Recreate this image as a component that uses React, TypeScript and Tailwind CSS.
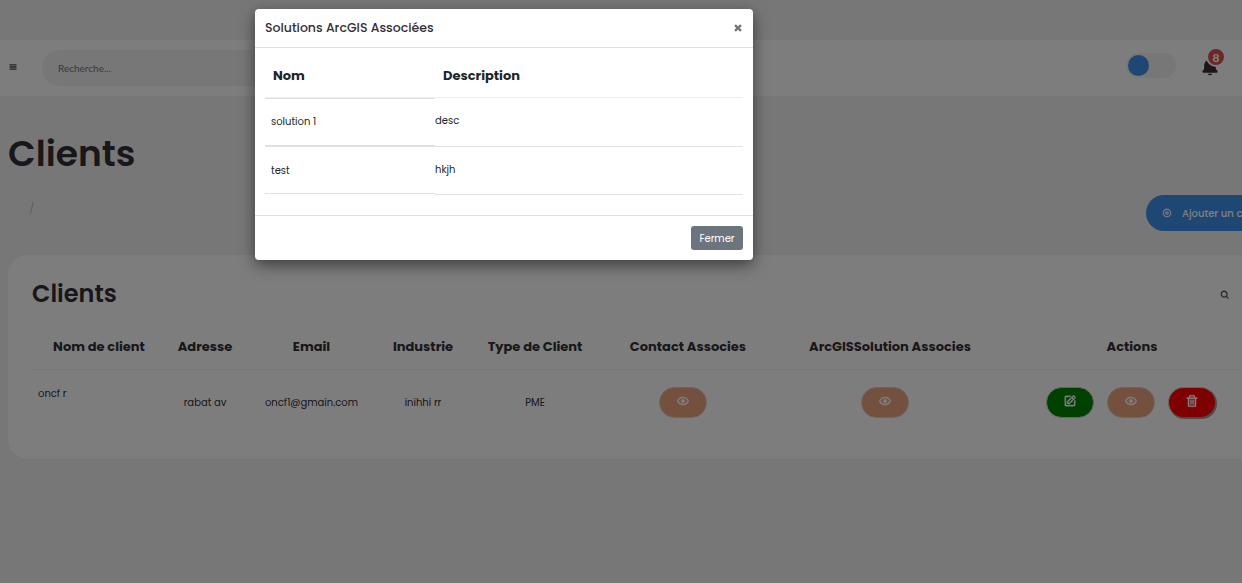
import type { ReactNode } from "react";
import { BiEdit, BiMenu, BiPlusCircle, BiSearch, BiShow, BiTrash, BiSolidBell } from "react-icons/bi";

const solutions = [
  { nom: "solution 1", description: "desc" },
  { nom: "test", description: "hkjh" },
];

const columns = [
  "Nom de client",
  "Adresse",
  "Email",
  "Industrie",
  "Type de Client",
  "Contact Associes",
  "ArcGISSolution Associes",
  "Actions",
];

const tableGrid = "grid grid-cols-[134px_78px_135px_88px_136px_170px_234px_250px]";

function Pill({ className, children }: { className: string; children: ReactNode }) {
  return (
    <button
      className={`flex h-[31px] w-12 items-center justify-center rounded-[20px] border pb-[3px] text-[14px] text-white ${className}`}
    >
      {children}
    </button>
  );
}

function ViewPill() {
  return (
    <Pill className="border-[#d2cac6] bg-[#e9a17f]">
      <BiShow className="stroke-current stroke-[0.6]" />
    </Pill>
  );
}

function Navbar() {
  return (
    <nav className="mt-10 flex h-14 shrink-0 items-center bg-[#fafafa]">
      <BiMenu className="mb-0.5 ml-2 size-[10px] stroke-current stroke-[0.5] text-[#222]" />
      <div className="ml-6 flex h-9 w-[400px] items-center rounded-full bg-[#eee] pl-4 font-['Lato',sans-serif] text-[10px] text-[#757575]">
        Recherche...
      </div>
      <div className="ml-auto mr-6 mt-[-5px] flex h-[25px] w-[50px] items-center rounded-full bg-[#eee] pl-[2px]">
        <div className="size-[21px] rounded-full bg-[#3c91e6]" />
      </div>
      <div className="relative mb-0.5 mr-[22px] size-5">
        <BiSolidBell className="size-5 text-[#342e37]" />
        <span className="absolute -top-[10px] left-[6px] flex size-5 items-center justify-center rounded-full border-2 border-[#fafafa] bg-[#db504a] pt-px font-['Lato',sans-serif] text-[12px] font-bold text-white">
          8
        </span>
      </div>
    </nav>
  );
}

function ClientsCard() {
  return (
    <section className="ml-2 mt-6 h-[204px] w-[1300px] rounded-[20px] bg-[#fbfbfb] pl-6 pt-[23px]">
      <div className="flex h-8 w-[1198px] items-center justify-between">
        <h3 className="text-[24px] font-semibold">Clients</h3>
        <BiSearch className="mt-[2px] size-[10px] stroke-current stroke-[0.5]" />
      </div>
      <div className={`${tableGrid} mt-3 h-12 items-center border-b border-[#eee] pt-[3px] text-center text-[13px] font-bold`}>
        {columns.map((label) => (
          <div key={label}>{label}</div>
        ))}
      </div>
      <div className={`${tableGrid} h-[65px] items-center text-center text-[10px]`}>
        <div className="mb-[18px] pl-1.5 text-left">oncf r</div>
        <div>rabat av</div>
        <div>oncf1@gmain.com</div>
        <div>inihhi rr</div>
        <div>PME</div>
        <div className="flex justify-center pr-2.5">
          <ViewPill />
        </div>
        <div className="flex justify-center pr-2.5">
          <ViewPill />
        </div>
        <div className="flex gap-[13px] pl-[39px]">
          <Pill className="border-[#c5ccc5] bg-[#008000]">
            <BiEdit className="stroke-current stroke-[0.6]" />
          </Pill>
          <ViewPill />
          <Pill className="border-[#ccc] border-r-[#999] border-b-[#999] bg-[#ff0000] shadow-[1px_1px_0_#999]">
            <BiTrash className="stroke-current stroke-[0.6]" />
          </Pill>
        </div>
      </div>
    </section>
  );
}

function SolutionsModal() {
  return (
    <div className="flex h-[251px] w-[498px] flex-col rounded-[4px] bg-white text-[#212529] shadow-[0_5px_15px_rgba(0,0,0,0.5)]">
      <header className="flex h-[39px] items-center justify-between border-b border-[#dee2e6] px-2.5">
        <h5 className="text-[12.5px] font-medium text-[#342e37]">Solutions ArcGIS Associées</h5>
        <button className="pr-px text-[#777]">
          <svg viewBox="0 0 8 8" className="size-2" stroke="currentColor" strokeWidth="2.4">
            <path d="M1 1.1 7 6.9M7 1.1 1 6.9" />
          </svg>
        </button>
      </header>
      <div className="flex h-[167px] px-2.5 text-[10px]">
        <div className="w-[170px]">
          <div className="flex h-[50px] items-center border-b border-[#eee] pb-px pl-2 pt-[7px] text-[13px] font-bold">Nom</div>
          {solutions.map((s) => (
            <div
              key={s.nom}
              className="flex h-12 items-center border-t border-[#dedede] pb-0.5 pl-1.5 last:border-b last:border-[#dee2e6] last:pb-0 [&:nth-child(2)]:border-b"
            >
              {s.nom}
            </div>
          ))}
        </div>
        <div className="flex-1">
          <div className="flex h-[50px] items-center border-b border-[#eee] pb-px pl-2 pt-[7px] text-[13px] font-bold">Description</div>
          {solutions.map((s) => (
            <div key={s.nom} className="flex h-[49px] items-center border-b border-[#dee2e6] pb-[3px] last:h-12 last:pb-[2px]">
              {s.description}
            </div>
          ))}
        </div>
      </div>
      <footer className="flex h-[45px] items-center justify-end border-t border-[#dee2e6] px-2.5">
        <button className="h-6 w-[52px] rounded-[3px] bg-[#6c757d] pt-px text-[10px] text-white">Fermer</button>
      </footer>
    </div>
  );
}

export default function App() {
  return (
    <div className="relative flex h-[583px] w-full flex-col overflow-hidden bg-[#eee] font-['Poppins','Inter',sans-serif] text-[#342e37]">
      <Navbar />
      <h1 className="ml-2 mt-9 text-[36px] font-semibold leading-[43px]">Clients</h1>
      <div className="mt-5 flex h-9 w-[1310px] items-center justify-between">
        <span className="ml-[29px] mt-[-10px] text-[11px] text-[#bbb]">/</span>
        <button className="flex h-9 w-[164px] items-center gap-2.5 rounded-full bg-[#3c91e6] pl-4 text-[10px] font-medium text-white">
          <BiPlusCircle className="size-[10px] stroke-current stroke-[0.5]" />
          <span className="whitespace-nowrap pt-px">Ajouter un client</span>
        </button>
      </div>
      <ClientsCard />
      <div className="absolute inset-0 bg-black/50 pl-[255px] pt-[9px]">
        <SolutionsModal />
      </div>
    </div>
  );
}
